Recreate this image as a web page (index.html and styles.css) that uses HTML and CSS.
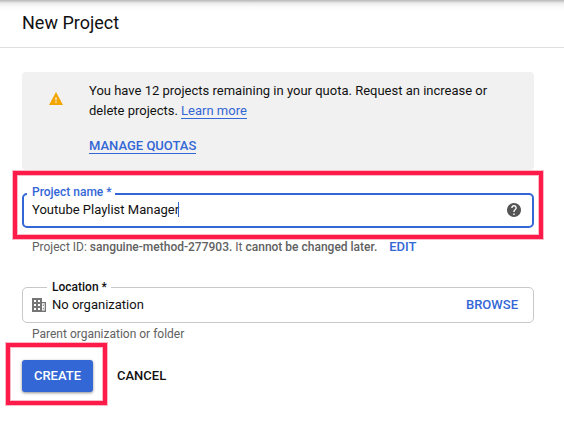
FILE: index.html
```html
<!DOCTYPE html>
<html lang="en">
<head>
<meta charset="utf-8">
<title>New Project</title>
<link rel="stylesheet" href="styles.css">
</head>
<body>
<header class="header"><h1 class="title">New Project</h1></header>
<main class="content">
  <section class="quota">
    <svg class="warning" viewBox="0 0 22 19" preserveAspectRatio="none"><path fill="#f4a500" d="M0 19h22L11 0z"/><path fill="#f1f1f1" d="M10 7.5h2v5h-2zM10 14h2v2h-2z"/></svg>
    <div class="quota-body">
      <p class="quota-text">You have 12 projects remaining in your quota. Request an increase or<br>delete projects. <a class="learn">Learn more</a></p>
      <a class="manage">MANAGE QUOTAS</a>
    </div>
  </section>
  <div class="field name-field">
    <span class="label name-label">Project name *</span>
    <span class="value">Youtube Playlist Manager</span><span class="caret"></span>
    <svg class="help" viewBox="2 2 20 20"><path fill="#555" d="M12 2C6.48 2 2 6.48 2 12s4.48 10 10 10 10-4.48 10-10S17.52 2 12 2zm1 17h-2v-2h2v2zm2.07-7.75l-.9.92C13.45 12.9 13 13.5 13 15h-2v-.5c0-1.1.45-2.1 1.17-2.83l1.24-1.26c.37-.36.59-.86.59-1.41 0-1.1-.9-2-2-2s-2 .9-2 2H8c0-2.21 1.79-4 4-4s4 1.79 4 4c0 .88-.36 1.68-.93 2.25z"/></svg>
    <span class="highlight name-highlight"></span>
  </div>
  <p class="hint id-hint">Project ID: <b class="project-id">sanguine-method-277903.</b> It <b class="fixed">cannot be changed later.</b><a class="edit">EDIT</a></p>
  <div class="field location-field">
    <span class="label location-label">Location *</span>
    <svg class="building" viewBox="0 0 14 14"><path fill="#757575" fill-rule="evenodd" d="M0 0h10v4h4v10H0zM2 2v2h2V2zM6 2v2h2V2zM2 6v2h2V6zM6 6v2h2V6zM2 10v2h2v-2zM6 10v2h2v-2zM10 5.200v7.400h2.700V5.200z"/><path fill="#757575" d="M10.800 6.500h1v1.500h-1zM10.800 9.800h1v1.500h-1z"/></svg>
    <span class="value">No organization</span>
    <a class="browse">BROWSE</a>
  </div>
  <p class="hint parent-hint">Parent organization or folder</p>
  <div class="actions">
    <div class="create-wrap"><button class="create">CREATE</button><span class="highlight create-highlight"></span></div>
    <button class="cancel">CANCEL</button>
  </div>
</main>
</body>
</html>
```
FILE: styles.css
```css
* { box-sizing: border-box; }
body {
  margin: 0;
  height: 427px;
  overflow: hidden;
  background: #fff;
  color: #111;
  font: 13px/20px Roboto, sans-serif;
}
p, h1 { margin: 0; }
.header {
  height: 48px;
  padding: 11px 22px 0;
  border-bottom: 1px solid #dedede;
  background: linear-gradient(#bbb 0, #c2c2c2 1px, #dcdcdc 2px, #f0f0f0 4px, #fafafa 7px, #fff 11px);
}
.title { font-size: 18px; line-height: 24px; font-weight: 400; }
.content { padding: 24px 30px 0 22px; }
.quota {
  display: flex;
  height: 98px;
  padding: 9px 0 0 27px;
  border-radius: 4px;
  background: #f1f1f1;
}
.warning { width: 14px; height: 13px; margin: 11px 26px 0 0; }
.quota-text { height: 40px; white-space: nowrap; }
a { color: #3367d6; }
.learn, .manage { display: inline-block; line-height: 14px; border-bottom: 1px solid #3367d6; }
.manage { margin-top: 18px; font-weight: 500; }
.field {
  position: relative;
  display: flex;
  align-items: center;
  height: 36px;
  border: 1px solid #c8c8c8;
  border-radius: 5px;
}
.name-field { height: 35px; margin-top: 23px; padding: 0 11px 2px 8px; border: 2px solid #3367d6; }
.label {
  position: absolute;
  top: -9px;
  left: 24px;
  padding: 0 4px 0 5px;
  background: #fff;
  font-size: 12px;
  line-height: 16px;
  font-weight: 500;
}
.name-label { top: -11px; left: 3px; padding-right: 3px; color: #3367d6; }
.caret { width: 1px; height: 15px; margin-left: -1px; background: #3367d6; }
.help { width: 14px; height: 14px; margin-left: auto; }
.highlight {
  position: absolute;
  border: 4px solid #fe1b4a;
  box-shadow: 0 0 0 1px #fbb8c6, inset 0 0 0 1px #fbb8c6;
  pointer-events: none;
}
.name-highlight { top: -24px; right: -11px; bottom: -13px; left: -11px; }
.hint { font-size: 12px; line-height: 16px; padding-left: 10px; color: #616161; white-space: nowrap; }
.id-hint { margin-top: 11px; height: 16px; }
.hint b { font-weight: 500; }
.edit { margin-left: 12px; font-size: 13px; font-weight: 500; }
.location-field { margin-top: 32px; padding: 0 15px 0 9px; }
.building { width: 14px; height: 14px; margin-right: 6px; }
.browse { margin-left: auto; font-weight: 500; }
.parent-hint { margin-top: 3px; }
.actions { display: flex; align-items: center; margin-top: 18px; }
.create-wrap { position: relative; }
button { border: 0; padding: 0; font: 500 13px/20px Roboto, sans-serif; }
.create {
  display: block;
  width: 71px;
  height: 32px;
  border-radius: 3px;
  background: #3367d6;
  color: #fff;
  box-shadow: 0 1px 3px rgba(0, 0, 0, .45);
}
.create-highlight { top: -17px; right: -14px; bottom: -13px; left: -16px; }
.cancel { margin-left: 24px; background: none; color: #111; }
```
